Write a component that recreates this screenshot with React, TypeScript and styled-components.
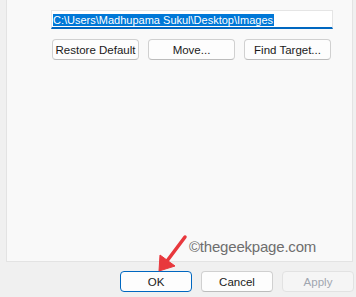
import React from "react";
import styled, { createGlobalStyle } from "styled-components";

const GlobalStyle = createGlobalStyle`
  html, body {
    margin: 0;
    padding: 0;
    background: #f0f0f0;
  }
  body {
    font-family: "Liberation Sans", Arial, sans-serif;
  }
`;

const Window = styled.div`
  width: 356px;
  height: 297px;
  background: #f0f0f0;
  display: flex;
  flex-direction: column;
  overflow: hidden;
  position: relative;
`;

const TabPanel = styled.div`
  margin-left: 6px;
  width: 347px;
  height: 262px;
  box-sizing: border-box;
  background: #f9f9f9;
  border: 1px solid #e3e3e3;
  border-top: none;
  padding: 10px 0 0 44px;
  display: flex;
  flex-direction: column;
`;

const PathField = styled.div`
  width: 282px;
  height: 19px;
  box-sizing: border-box;
  background: #fff;
  border: 1px solid #e5e5e5;
  border-bottom: 2px solid #0067c0;
  padding: 2px 0 0 1px;
  font-size: 11px;
  line-height: 14px;
  white-space: nowrap;
  overflow: hidden;
`;

const Selected = styled.span`
  background: #0078d7;
  color: #fff;
  padding-right: 1px;
`;

const ButtonRow = styled.div`
  display: flex;
  gap: 9px;
  margin-top: 10px;
  margin-left: 1px;
`;

const Button = styled.button<{ $primary?: boolean }>`
  width: 87px;
  height: 21px;
  box-sizing: border-box;
  padding: 0;
  background: #fdfdfd;
  border: 1px solid ${(p) => (p.$primary ? "#0067c0" : "#d0d0d0")};
  border-bottom-color: ${(p) => (p.$primary ? "#0067c0" : "#bcbcbc")};
  border-radius: 4px;
  font-family: "Liberation Sans", Arial, sans-serif;
  font-size: 11.5px;
  color: #1a1a1a;
  &:disabled {
    color: #a0a6b0;
    background: #f5f5f5;
    border-color: #e2e2e2;
  }
`;

const Footer = styled.div`
  display: flex;
  justify-content: flex-end;
  gap: 9px;
  padding: 9px 2px 0 0;
`;

const FooterButton = styled(Button)`
  width: 72px;
`;

const Watermark = styled.div`
  position: absolute;
  left: 189px;
  top: 238px;
  font-family: "Liberation Sans", Arial, sans-serif;
  font-size: 15px;
  letter-spacing: -0.2px;
  color: #6e6e6e;
`;

const Arrow = styled.svg`
  position: absolute;
  left: 150px;
  top: 230px;
`;

export default function App() {
  return (
    <>
      <GlobalStyle />
      <Window>
        <TabPanel>
          <PathField>
            <Selected>C:\Users\Madhupama Sukul\Desktop\Images</Selected>
          </PathField>
          <ButtonRow>
            <Button>Restore Default</Button>
            <Button>Move...</Button>
            <Button>Find Target...</Button>
          </ButtonRow>
        </TabPanel>
        <Footer>
          <FooterButton $primary>OK</FooterButton>
          <FooterButton>Cancel</FooterButton>
          <FooterButton disabled>Apply</FooterButton>
        </Footer>
        <Watermark>©thegeekpage.com</Watermark>
        <Arrow width="45" height="45" viewBox="0 0 45 45">
          <line x1="35" y1="7" x2="17" y2="31" stroke="#e8383d" strokeWidth="3.5" strokeLinecap="round" />
          <polygon points="9,41 10,25 25,36" fill="#e8383d" strokeLinejoin="round" stroke="#e8383d" strokeWidth="1" />
        </Arrow>
      </Window>
    </>
  );
}
